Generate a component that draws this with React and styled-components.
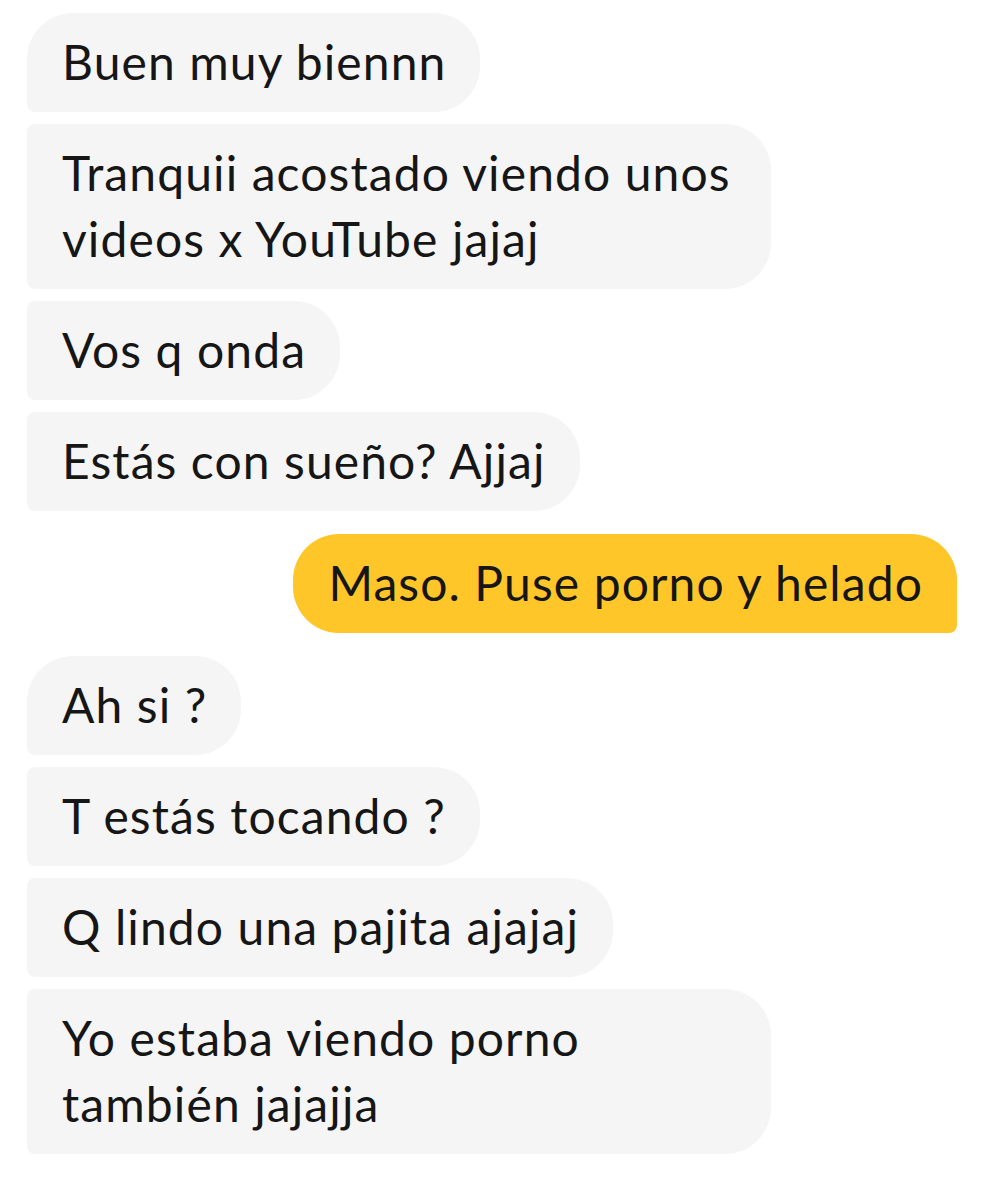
import React from 'react';
import styled, { createGlobalStyle } from 'styled-components';

const GlobalStyle = createGlobalStyle`
  html, body {
    margin: 0;
    padding: 0;
    background: #ffffff;
  }
  body {
    font-family: "Lato", "Noto Sans", sans-serif;
    -webkit-font-smoothing: antialiased;
  }
`;

// Chat thread
const Thread = styled.div`
  display: flex;
  flex-direction: column;
  padding: 13px 28px 40px 27px;
`;

const Group = styled.div`
  display: flex;
  flex-direction: column;
  align-items: ${(p) => (p.$mine ? 'flex-end' : 'flex-start')};
  gap: 12px;
  margin-bottom: 23px;

  &:last-child {
    margin-bottom: 0;
  }
`;

const Bubble = styled.div`
  box-sizing: border-box;
  max-width: 744px;
  padding: 16px 34px 17px 35px;
  font-size: 48px;
  letter-spacing: 1.1px;
  line-height: 66px;
  color: #161616;
  background-color: ${(p) => (p.$mine ? '#ffc629' : '#f5f5f5')};
  border-radius: ${(p) => p.$radius};
`;

const BIG = '46px';
const SMALL = '8px';

// radius for a bubble depending on its position in the group
const radiusFor = (mine, index) => {
  const first = index === 0;
  if (mine) {
    return `${BIG} ${first ? BIG : SMALL} ${SMALL} ${BIG}`;
  }
  return `${first ? BIG : SMALL} ${BIG} ${BIG} ${SMALL}`;
};

const groups = [
  {
    mine: false,
    messages: [
      'Buen muy biennn',
      'Tranquii acostado viendo unos videos x YouTube jajaj',
      'Vos q onda',
      'Estás con sueño? Ajjaj',
    ],
  },
  {
    mine: true,
    messages: ['Maso. Puse porno y helado'],
  },
  {
    mine: false,
    messages: [
      'Ah si ?',
      'T estás tocando ?',
      'Q lindo una pajita ajajaj',
      'Yo estaba viendo porno también jajajja',
    ],
  },
];

const App = () => {
  return (
    <>
      <GlobalStyle />
      <Thread>
        {groups.map((group, gi) => (
          <Group key={gi} $mine={group.mine}>
            {group.messages.map((text, i) => (
              <Bubble key={i} $mine={group.mine} $radius={radiusFor(group.mine, i)}>
                {text}
              </Bubble>
            ))}
          </Group>
        ))}
      </Thread>
    </>
  );
};

export default App;
